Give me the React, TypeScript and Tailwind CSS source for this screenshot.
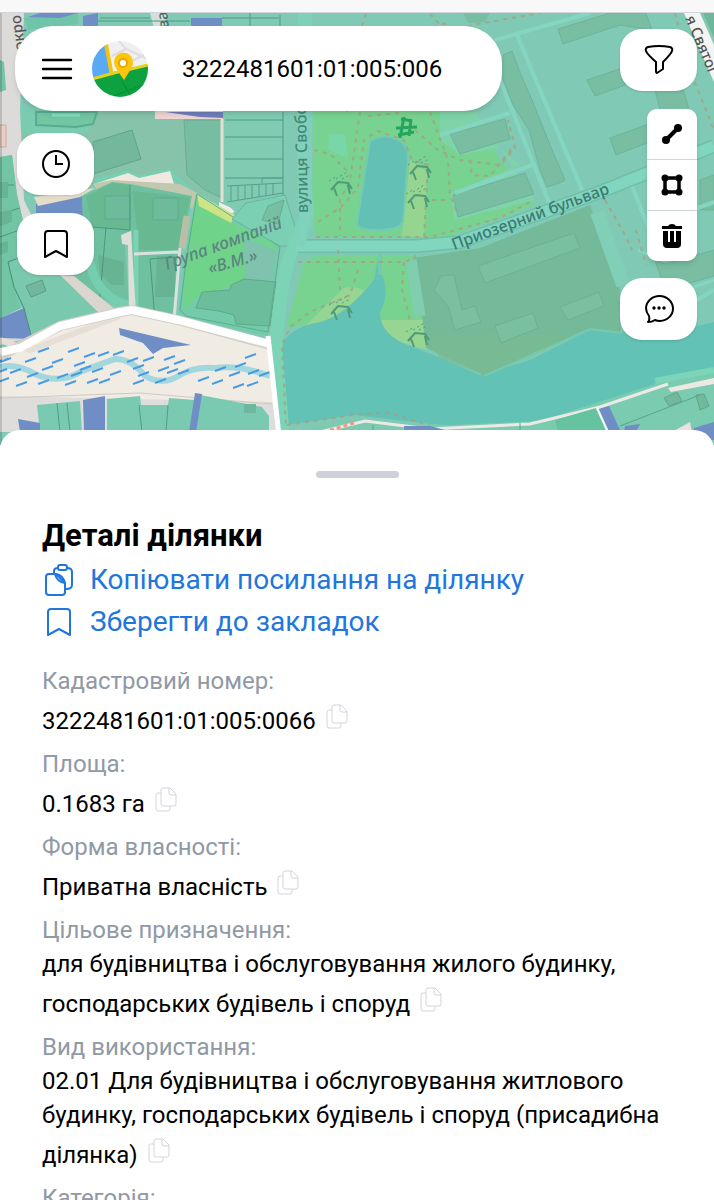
import { useState } from 'react';

interface Field {
  label: string;
  value?: string;
}

const FIELDS: Field[] = [
  { label: 'Кадастровий номер:', value: '3222481601:01:005:0066' },
  { label: 'Площа:', value: '0.1683 га' },
  { label: 'Форма власності:', value: 'Приватна власність' },
  {
    label: 'Цільове призначення:',
    value: 'для будівництва і обслуговування жилого будинку, господарських будівель і споруд',
  },
  {
    label: 'Вид використання:',
    value:
      '02.01 Для будівництва і обслуговування житлового будинку, господарських будівель і споруд (присадибна ділянка)',
  },
  { label: 'Категорія:' },
];

// short strokes of the wetland pattern: [x, y]
const REEDS = [
  [43, 350], [73, 350], [30, 360], [57, 361], [89, 355], [103, 354], [118, 353], [79, 364],
  [47, 368], [5, 360], [132, 360], [148, 359], [169, 358], [15, 371], [32, 375], [62, 376],
  [76, 374], [97, 370], [115, 373], [138, 367], [163, 369], [179, 362], [21, 384], [43, 382],
  [70, 383], [92, 381], [104, 381], [138, 382], [160, 381], [183, 372], [203, 379], [217, 382],
  [220, 369], [240, 365], [250, 356], [234, 374], [253, 372], [264, 374], [238, 386], [252, 384],
  [1, 371], [3, 380], [85, 368], [143, 374], [172, 371], [2, 360],
];

const GAZEBOS = [
  [341, 188], [420, 172], [418, 201], [341, 312], [418, 339],
];

function CadastralMap() {
  return (
    <svg
      className="absolute inset-0 h-full w-full"
      viewBox="0 13 714 432"
      preserveAspectRatio="xMidYMin slice"
      aria-hidden="true"
    >
      <rect y="13" width="714" height="432" fill="#80cab5" />

      {/* western blocks */}
      <path d="M0 13H24L20 110L24 200L60 275L112 310L60 330L0 345Z" fill="#dcdbd9" />
      <path d="M0 60L4 62L6 90L0 92Z" fill="#76c3a7" />
      <path d="M0 125H6V147H0Z" fill="#e6cfc6" stroke="#c9a99d" />
      <path d="M0 157L12 155L17 195L24 225L45 265L62 276L104 317L30 340L22 308L0 318Z" fill="#7ac8ad" />
      <path d="M0 157L12 155L17 195L24 225L30 250L8 262L14 287L20 308L0 318Z" fill="#72c4a5" />
      <path d="M24 18L52 13H78V24L28 30Z" fill="#6fc4aa" />
      <path d="M28 17L40 13H78L60 18Z" fill="#6f8ec6" />
      <path d="M83 16L98 13V28H83Z" fill="#6f8ec6" />
      <path d="M150 13H166V28H154Z" fill="#d8dddb" />
      <path d="M191 18H222V27H191Z" fill="#6f8ec6" />
      <path d="M100 18H150M250 13V28M280 15V28M98 21H190M222 18H279" stroke="#519982" fill="none" />
      <path d="M0 185H14M0 214L20 208M0 237L25 228M0 250L8 244" stroke="#4b9a7f" fill="none" />
      <path d="M0 182H8V198H0ZM0 212L12 210V222L0 226ZM0 243L8 241V252L0 255Z" fill="#68b596" />
      <path d="M0 318L24 308L32 339L0 338Z" fill="#6f8ec6" />
      <path d="M8 262L40 250M8 262L14 287L24 308L32 339" stroke="#488d75" fill="none" />
      <path d="M26 286L42 280L46 291L31 297Z" fill="#70b79d" stroke="#5b9f86" />

      <path d="M22 110H222V204L195 196L170 177L160 173L134 178L95 184L40 194L22 140Z" fill="#86c3aa" />
      <path d="M22 110H100L93 124L88 132L30 134L22 132Z" fill="#79ccb0" />
      <path d="M36 112H97L93 124L76 127L36 125Z" fill="#73c6a2" stroke="#58ad91" strokeWidth="2" />
      <path d="M52 115H80" stroke="#7fdfc0" strokeWidth="3" />
      <path d="M93 142L132 130L141 159L93 174Z" fill="#73b89d" stroke="#60a58a" />
      <path d="M184 120H222V198L205 190L187 175Z" fill="#77bda1" stroke="#68ae92" />
      <path d="M95 181L128 173L139 178L170 171L196 196L210 200" stroke="#77ceb2" strokeWidth="5" fill="none" />
      <path d="M155 111H223V119H155Z" fill="#f0d5d2" />
      <path d="M165 112H223V118L200 117Z" fill="#6f7fbc" />
      <path d="M94 184L128 173L139 178L170 171L174 184L112 182Z" fill="#efe9e0" />
      <path d="M93 184L112 180L180 184L197 193L192 209L178 193L129 189L97 190Z" fill="#c2c8ae" />
      <path d="M222 119V202" stroke="#e6dfd6" strokeWidth="3" fill="none" />
      <path d="M219 202L225 205L236 210L232 214L219 206Z" fill="#f1ece8" />
      <path d="M225 112H285V190L258 195L238 215L225 202Z" fill="#81cbb3" />
      <path d="M225 120H283M225 137H283M225 159H283M225 178H283M283 112V195" stroke="#4d9a83" fill="none" />
      <path d="M227 186L283 183M227 202L283 193M231 186V201M238 186V200M245 185V199M252 185V198M259 184V197M266 184V196M273 184V195M262 183V178H283" stroke="#579f8b" fill="none" />

      <path d="M36 204L82 196L90 230L60 248L36 214Z" fill="#6f8ec6" />
      <path d="M34 197L95 188L80 197L38 206Z" fill="#e3ddc9" />
      <path d="M82 196L112 182L130 184L192 196L180 260L172 318L134 306L132 230L124 234L130 312L96 296L62 276L84 268Z" fill="#6fc0a0" />
      <path d="M86 197L112 183L130 185V230L92 227ZM132 191L190 197L178 250H137V230Z" fill="#68b891" />
      <path d="M105 196H130V219H105ZM153 198H178V220H153Z" fill="#6dbb9b" stroke="#60ab8b" />
      <path d="M98 255L124 262L124 285L112 285L100 275ZM157 256H175V297H155Z" fill="#68b393" />
      <path d="M92 227L130 230M106 227L100 297M130 185V230M150 259L178 257M150 259L155 320" stroke="#4c987b" fill="none" />
      <path d="M90 262C94 285 108 300 130 306" stroke="#76ceb0" strokeWidth="9" fill="none" />
      <path d="M136 230V310" stroke="#7bd3b3" strokeWidth="5" fill="none" />
      <path d="M60 275L74 276L116 310L104 318Z" fill="#dbd5cf" />
      <path d="M121 235L131 231L136 313L129 315L128 245L122 244Z" fill="#dededa" />
      <path d="M134 254L178 252M180 248L174 320" stroke="#dbe1dc" strokeWidth="3" fill="none" />
      <path d="M187 216L182 248" stroke="#b9bfa4" strokeWidth="7" fill="none" />

      {/* company grounds */}
      <path d="M196 194L280 247L268 336L178 317L184 260Z" fill="#74cbac" />
      <path d="M197 198L232 221L245 246L248 276L235 285L198 296L183 312L186 260Z" fill="#70d38a" />
      <path d="M197 194L235 215L231 223L199 206Z" fill="#cce486" />
      <path d="M232 222L278 244L274 250L240 235Z" fill="#72d390" />
      <path d="M244 240L276 250L272 284L245 280Z" fill="#7fc3af" />
      <path d="M202 292L230 290L231 285L244 279L276 282L270 326L236 324L234 315L219 311L196 308Z" fill="#6cbd9c" stroke="#5daa88" />
      <path d="M197 194L186 262L180 310L186 316L268 332L280 247Z" stroke="#5cae8e" fill="none" />
      <path d="M232 219L246 203L285 195L296 230L298 246L280 246Z" fill="#7bcfb2" stroke="#68b79e" />
      <path d="M268 206L284 200L278 224L262 220Z" fill="#76bfa3" stroke="#68ad92" />

      {/* park */}
      <path d="M314 112H465L535 205L445 238H316L312 215Z" fill="#78d390" />
      <path d="M304 262L316 256H413L425 300L430 350L374 318L322 322L286 328Z" fill="#78d390" />
      <path d="M329 134H345L348 158L328 150Z" fill="#78d6a8" />
      <path d="M410 160L427 172L424 237L402 236Z" fill="#95d58f" />
      <path d="M306 325L344 288Q356 285 366 292L340 322ZM380 320H425L428 350L392 340Z" fill="#96d592" />
      <path d="M370 141Q378 136 390 137Q408 141 408 157L403 222Q400 229 382 230Q360 231 357 224Z" fill="#62c0b5" stroke="#73cbb2" strokeWidth="2" />

      {/* lake */}
      <path
        d="M378 257L381 257L382 275Q390 292 380 313Q380 335 410 346L436 356L480 375L530 360L590 330L660 335L714 322V372L640 396L560 419L480 427L430 424L354 415L285 425L281 350Q285 328 320 322Q345 316 374 280Z"
        fill="#62c2b5"
      />
      <path d="M380 250V275" stroke="#74c8ad" strokeWidth="4" fill="none" />

      {/* school grounds */}
      <path d="M413 258L480 248L590 205L620 290L621 332L590 329L540 352L484 375L426 348L422 315Z" fill="#74ba99" />
      <path d="M424 335L570 335L540 352L484 375L440 358Z" fill="#7abb90" opacity=".7" />
      <path
        d="M478 266L574 233L580 248L485 283ZM434 290L441 276L454 275L462 310L475 306L481 322L455 330L448 306ZM495 326L533 313L538 328L501 343ZM560 307L599 292L604 306L568 320Z"
        fill="#79c0a0"
        stroke="#6cb191"
      />
      <path d="M411 260L420 316" stroke="#80cdb0" strokeWidth="11" />
      <path d="M484 376L590 329L622 333" stroke="#75c9ad" strokeWidth="2" fill="none" />

      {/* northern blocks */}
      <path d="M440 112H475L535 200L455 220L450 193L520 165L500 148L460 155L440 140Z" fill="#7fd3a8" />
      <path
        d="M503 55L512 51L521 75L532 100L550 145L565 180L562 182L547 187L540 170L529 130L513 105L503 80ZM558 29L610 13H646L652 30L620 25L563 44ZM587 80L640 62L650 76L595 96ZM610 138L660 120V138L616 155ZM450 134L505 119L510 139L460 154ZM453 195L525 173L534 194L458 217ZM655 90L680 80L690 112L664 125ZM700 180L714 175V210H700ZM655 260L665 264L714 250V276L665 290Z"
        fill="#79bda3"
        stroke="#6fb399"
      />
      <path d="M463 13H490L485 22L468 23Z" fill="#79bda3" />
      <path d="M620 180L654 170M630 180L652 245" stroke="#79c3aa" fill="none" />
      <g stroke="#85d6c0" fill="none">
        <path d="M500 80L550 205M517 35L582 190M495 40L590 13M440 135L510 113M455 193L535 164" strokeWidth="4" />
        <path d="M629 178L655 245M660 222L714 202M680 310L714 290" strokeWidth="4" />
        <path d="M655 278L680 292L714 280M650 255L638 250" strokeWidth="3" />
      </g>
      <path d="M305 13V195Q310 215 304 228" stroke="#80cfb8" strokeWidth="14" fill="none" />
      <path d="M304 220Q298 238 290 256Q279 290 276 350L283 432" stroke="#7cd3b6" strokeWidth="13" fill="none" />
      <path d="M298 246H416L460 242L600 192L714 146" stroke="#6fbfa8" strokeWidth="14" fill="none" />
      <path d="M296 246H416L460 242L600 192L714 146" stroke="#82d5bf" strokeWidth="11" fill="none" />
      <path d="M302 112V195Q308 222 300 246" stroke="#80d2bb" strokeWidth="9" fill="none" />
      <path d="M597 212L623 285" stroke="#80cfb6" strokeWidth="14" />

      {/* footpaths */}
      <g stroke="#a99f80" strokeWidth="2" strokeDasharray="4 5" fill="none" opacity=".8">
        <path d="M366 14L347 70V112M430 14L445 30L540 13M425 30L450 22" />
        <path d="M360 112L350 180L340 200V236M314 150L330 154L348 172M318 222L340 208L358 188L364 140L378 131L404 140L412 160L428 165L424 237" />
        <path d="M316 237H430L500 218L534 200M368 116L400 113M430 112L448 160L450 195L458 215" />
        <path d="M415 130L438 150L460 160L500 165L515 148L508 120M470 160L472 175L490 176L515 145M432 200L450 200" />
        <path d="M298 262H405L416 256M338 250L340 290M358 270L350 295L310 312L290 327L282 345L286 425M404 262L402 290L410 320M605 200L625 235L632 250M636 230L646 265" />
        <path d="M287 425L360 414L390 413L430 426M675 13L688 65L714 130" />
      </g>

      {/* gazebos */}
      {GAZEBOS.map(([x, y]) => (
        <g key={`${x}-${y}`} transform={`translate(${x} ${y})`} stroke="#4f9b78" fill="none">
          <path d="M-10 2L-3 -6L7 -5L11 1M-7 0L-4 8M7 -3L9 6" strokeWidth="2" />
          <path d="M-12 -7L-4 -12M-5 -9L6 -16M1 -9L9 -13" strokeDasharray="2 3" />
        </g>
      ))}
      <path d="M401 119L412 121M396 128L417 127M398 135L414 132M404 117L400 138M411 119L409 136" stroke="#26a55f" strokeWidth="3" />

      {/* wetland */}
      <path d="M0 350L60 328L120 310L134 309L270 343L278 432H0Z" fill="#f0ece4" />
      <path d="M0 340L30 350L120 316" stroke="#e7dfd6" strokeWidth="6" fill="none" />
      <path d="M0 367Q17 363 35 374Q60 385 82 371L115 359Q132 359 145 376Q163 386 180 375Q195 366 215 368Q240 365 270 376" stroke="#a3d7de" strokeWidth="6" fill="none" />
      <g stroke="#489be3" strokeWidth="2">
        {REEDS.map(([x, y], i) => (
          <path key={i} d={`M${x - 5} ${y + 2}L${x + 6} ${y - 2}`} />
        ))}
      </g>
      <path d="M119 328L191 345L163 348L153 354L143 343L120 335Z" fill="#6f8ec6" />
      <path d="M0 396L272 402L280 432H0Z" fill="#dedddb" />
      <path d="M0 398L140 393L272 404" stroke="#cfc8c2" fill="none" />
      <path d="M37 405L80 401L82 432H40ZM107 399L140 396L141 405H168L169 398L195 400V394L262 407L269 416V432H107Z" fill="#79cab0" />
      <path d="M18 419L40 423V432H20ZM83 400L105 396V432H84ZM195 393L202 394L196 432H189Z" fill="#6f8ec6" />
      <path d="M57 403L60 432M67 403L70 432M139 405L142 432M168 405L166 432" stroke="#539d85" />
      <path d="M244 404H256V413H244Z" fill="#6fb79c" />
      <path d="M0 356L60 326L120 312L132 310L178 320L270 345" stroke="#d4cfc8" strokeWidth="10" fill="none" />
      <path d="M0 352L20 348L60 326L120 312L132 310L178 320L270 344" stroke="#fff" strokeWidth="8" fill="none" />
      <path d="M268 336L274 390L280 445" stroke="#fff" strokeWidth="5" fill="none" />

      {/* southern shore */}
      <path d="M290 432L354 418L430 426L540 421L655 384L714 371V445H290Z" fill="#7bcbb0" />
      <path d="M655 381L714 370" stroke="#7bd6b9" strokeWidth="6" />
      <path d="M320 432L365 421L430 429L530 424L600 407L668 384" stroke="#eceae6" strokeWidth="3" fill="none" />
      <path d="M668 388L714 378V384L671 392Z" fill="#eee8e3" />
      <path d="M555 420L596 408L606 432H558Z" fill="#66c3a0" />
      <path d="M599 409L609 406L621 432H609ZM404 426H430L502 445H405ZM625 426L640 424L636 432H624ZM694 428L714 422V440H692Z" fill="#6f8ec6" />
      <path d="M597 408L608 432" stroke="#fff" strokeWidth="2" />
      <path d="M672 432L690 422L692 432Z" fill="#eee0de" />
      <path d="M664 398L677 392L682 401L669 406ZM696 395L704 394L709 406L700 410Z" fill="#71b89c" stroke="#5ea88a" />
      <path d="M620 426L700 395M520 423V432M373 425V432" stroke="#5ba48c" />
      <path d="M330 430L354 423" stroke="#ee9a8e" strokeWidth="3" strokeDasharray="4 3" />

      {/* street at the north-east corner */}
      <path d="M703 13H714V38Z" fill="#6fb79b" />
      <path d="M684 13H700L714 45V82Z" fill="#f5f4f2" />

      <g fontFamily="'Noto Sans', sans-serif" fontWeight="500" fill="#3c7a72">
        <text transform="translate(308 213) rotate(-91)" fontSize="16" fill="#44887a">вулиця Свободи</text>
        <text transform="translate(454 250) rotate(-20)" fontSize="16">Приозерний бульвар</text>
        <text transform="translate(167 270) rotate(-20)" fontSize="17" fill="#5b8581" fontStyle="italic">
          Група компаній
        </text>
        <text transform="translate(210 274) rotate(-16)" fontSize="17" fill="#5b8581" fontStyle="italic">«В.М.»</text>
        <text transform="translate(685 18) rotate(67)" fontSize="15" fill="#555">я Святої</text>
        <text transform="translate(25 50) rotate(-97)" fontSize="15" fill="#555">окро</text>
        <text transform="translate(169 28) rotate(-97)" fontSize="15" fill="#4a6c66">ва</text>
      </g>
      <path d="M0 13V445" stroke="#000" strokeOpacity=".15" strokeWidth="4" />
    </svg>
  );
}

function Logo() {
  return (
    <svg className="size-14 shrink-0" viewBox="0 0 56 56" role="img" aria-label="Логотип">
      <clipPath id="logo-round">
        <circle cx="28" cy="28" r="28" />
      </clipPath>
      <g clipPath="url(#logo-round)">
        <rect width="56" height="56" fill="#f0f0f3" />
        <path d="M27 0L34 8L56 18M34 8L20 15M40 20L56 12" stroke="#dcdce2" strokeWidth="2" fill="none" />
        <path d="M0 0H13L20 34L0 40Z" fill="#5aa9f5" />
        <path d="M14 3L20 35" stroke="#f2c410" strokeWidth="4" />
        <path d="M0 39L20 33L56 24V56H0Z" fill="#0da23f" />
        <path d="M0 38L22 32L56 24" stroke="#e5d21c" strokeWidth="3" fill="none" />
        <path d="M22 55L56 42M30 40L39 56" stroke="#078d36" fill="none" />
        <path d="M32 39L25 29Q22 25 22 21A9 9 0 0 1 41 21Q41 26 37 31Z" fill="#fdc50b" />
        <circle cx="31" cy="22" r="5" fill="#e9a900" />
        <circle cx="31" cy="22" r="3" fill="#fff" />
      </g>
    </svg>
  );
}

function BookmarkIcon({ className }: { className: string }) {
  return (
    <svg className={className} viewBox="0 0 26 30" fill="none" stroke="currentColor" strokeWidth="2" strokeLinejoin="round">
      <path d="M2 28V5Q2 2 5 2H21Q24 2 24 5V28L13 22Z" />
    </svg>
  );
}

function CopyIcon() {
  return (
    <svg className="h-[25px] w-[22px]" viewBox="0 0 22 25" fill="none" stroke="currentColor" strokeLinejoin="round">
      <path d="M8 1H15L21 7V17Q21 19 19 19H8Q6 19 6 17V3Q6 1 8 1Z" />
      <path d="M14 1V6Q14 8 16 8H21" />
      <path d="M6 6H3Q1 6 1 8V22Q1 24 3 24H13Q15 24 15 22V19" />
    </svg>
  );
}

const roundButton =
  'flex h-[62px] w-[77px] items-center justify-center rounded-[22px] bg-white text-black shadow-sm';
const toolButton = 'flex h-[50px] w-full items-center justify-center text-black';

export default function App() {
  const [query, setQuery] = useState('3222481601:01:005:006');

  return (
    <div className="flex h-screen flex-col overflow-hidden bg-white font-['Roboto',sans-serif] text-black">
      <div className="h-[13px] shrink-0 border-b border-gray-300 bg-[#f8f8f8]" />

      <section className="relative shrink-0 overflow-hidden">
        <CadastralMap />
        <div className="relative flex gap-[118px] pt-[13px] pr-[17px] pb-[105px] pl-[15px]">
          <div className="min-w-0 flex-1">
            <div className="flex h-[85px] items-center rounded-[38px] bg-white pl-[26px] shadow-md">
              <button type="button" aria-label="Меню" className="shrink-0">
                <svg className="h-6 w-8" viewBox="0 0 32 24" stroke="currentColor" strokeWidth="2.4" strokeLinecap="round">
                  <path d="M2 3H30M2 12H30M2 21H30" />
                </svg>
              </button>
              <div className="ml-[19px] flex">
                <Logo />
              </div>
              <input
                type="text"
                aria-label="Кадастровий номер"
                value={query}
                onChange={(e) => setQuery(e.target.value)}
                className="ml-[34px] min-w-0 flex-1 bg-transparent pr-8 text-2xl outline-none"
              />
            </div>
            <div className="mt-[22px] ml-0.5 flex flex-col gap-[18px]">
              <button type="button" aria-label="Історія" className={roundButton}>
                <svg className="size-[30px]" viewBox="0 0 30 30" fill="none" stroke="currentColor" strokeWidth="2">
                  <circle cx="15" cy="15" r="13" />
                  <path d="M15 6V15H22" />
                </svg>
              </button>
              <button type="button" aria-label="Закладки" className={roundButton}>
                <BookmarkIcon className="h-[30px] w-[26px]" />
              </button>
            </div>
          </div>

          <div className="flex shrink-0 flex-col items-end pt-[3px]">
            <button type="button" aria-label="Фільтр" className={roundButton}>
              <svg className="size-[30px]" viewBox="0 0 30 30" fill="none" stroke="currentColor" strokeWidth="2" strokeLinejoin="round">
                <path d="M4 2Q15 0 26 2Q29 3 28 6Q27 9 19 17V24L13 28Q12 28 12 26V17Q3 9 2 6Q1 3 4 2Z" />
              </svg>
            </button>
            <div className="mt-[18px] flex w-[50px] flex-col gap-px overflow-hidden rounded-[10px] bg-gray-300 shadow-md">
              <button type="button" aria-label="Виміряти відстань" className={`bg-white ${toolButton}`}>
                <svg className="size-6" viewBox="0 0 24 24" fill="currentColor">
                  <path d="M5 19L19 5" stroke="currentColor" strokeWidth="4" />
                  <circle cx="6" cy="18" r="4" />
                  <circle cx="18" cy="6" r="4" />
                </svg>
              </button>
              <button type="button" aria-label="Виміряти площу" className={`bg-white ${toolButton}`}>
                <svg className="size-6" viewBox="0 0 24 24" fill="currentColor">
                  <rect x="5" y="5" width="14" height="14" fill="none" stroke="currentColor" strokeWidth="3.5" />
                  <circle cx="5" cy="5" r="3.5" />
                  <circle cx="19" cy="5" r="3.5" />
                  <circle cx="5" cy="19" r="3.5" />
                  <circle cx="19" cy="19" r="3.5" />
                </svg>
              </button>
              <button type="button" aria-label="Видалити" className={`bg-white ${toolButton}`}>
                <svg className="size-6" viewBox="0 0 24 24" fill="currentColor">
                  <path d="M2 2H8Q9 0 12 0Q15 0 16 2H22V5H2Z" />
                  <path d="M3 7H21V20Q21 24 17 24H7Q3 24 3 20Z" />
                  <path d="M9 6V18M15 6V18" stroke="#fff" strokeWidth="2" />
                </svg>
              </button>
            </div>
            <button type="button" aria-label="Написати нам" className={`mt-[17px] ${roundButton}`}>
              <svg className="size-[30px]" viewBox="0 0 30 30" fill="none" stroke="currentColor" strokeWidth="2" strokeLinejoin="round">
                <path d="M4 28Q6 26 5 22Q2 18 2 14A13.5 12.5 0 1 1 16 27Q13 27 11 26Q8 28 4 28Z" />
                <g fill="currentColor" stroke="none">
                  <circle cx="10" cy="14" r="1.7" />
                  <circle cx="15" cy="14" r="1.7" />
                  <circle cx="20" cy="14" r="1.7" />
                </g>
              </svg>
            </button>
          </div>
        </div>
      </section>

      <main className="relative -mt-[15px] min-h-0 flex-1 overflow-y-auto rounded-t-[20px] bg-white px-[42px] pt-[41px] [scrollbar-width:none]">
        <div className="mx-auto h-[7px] w-[83px] rounded-full bg-[#ccd2d8]" />
        <h1 className="mt-10 text-[31px] leading-9 font-bold">Деталі ділянки</h1>

        <div className="mt-[5px] flex flex-col items-start text-[28px] leading-[42px] text-[#2176dd]">
          <button type="button" className="flex items-center gap-[17px] pl-[3px]">
            <svg className="h-8 w-7" viewBox="0 0 28 32" fill="none" stroke="currentColor" strokeWidth="2" strokeLinejoin="round">
              <path d="M4 10H11L20 19V28Q20 31 17 31H4Q1 31 1 28V13Q1 10 4 10Z" />
              <path d="M10 10Q12 18 20 19M11 10Q18 11 20 19" />
              <path d="M9 9V7Q9 4 13 4M22 4Q27 4 27 8V21Q27 25 21 25" />
              <rect x="13" y="1" width="9" height="5" rx="2" />
            </svg>
            <span>Копіювати посилання на ділянку</span>
          </button>
          <button type="button" className="flex items-center gap-[18px] pl-1">
            <BookmarkIcon className="h-[30px] w-[26px]" />
            <span>Зберегти до закладок</span>
          </button>
        </div>

        <dl className="mt-[21px] text-2xl leading-[34px]">
          {FIELDS.map((f) => (
            <div key={f.label} className="mb-[9px]">
              <dt className="text-[#9099a6]">{f.label}</dt>
              {f.value && (
                <dd>
                  {f.value}
                  <button
                    type="button"
                    aria-label={`Копіювати: ${f.label}`}
                    className="ml-[10px] inline-flex h-[33px] items-end pb-[2px] align-baseline text-gray-300"
                  >
                    <CopyIcon />
                  </button>
                </dd>
              )}
            </div>
          ))}
        </dl>
      </main>
    </div>
  );
}
